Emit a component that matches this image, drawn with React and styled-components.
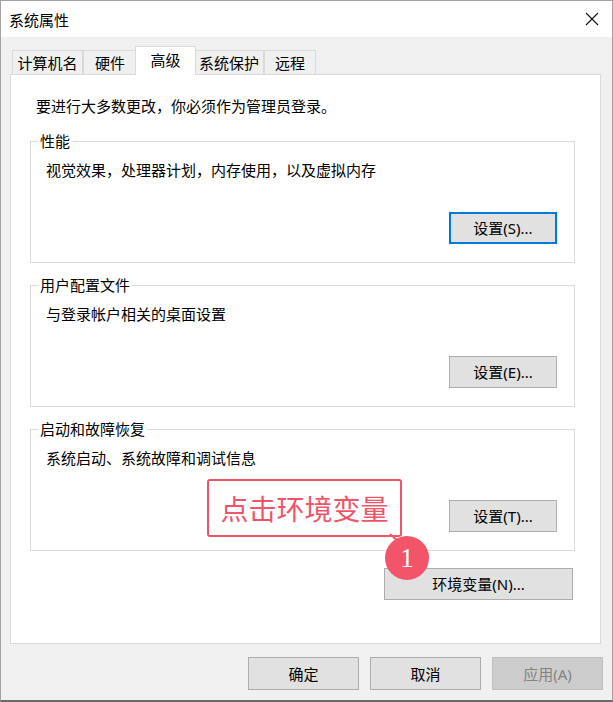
import React from "react";
import styled, { createGlobalStyle } from "styled-components";

const GlobalStyle = createGlobalStyle`
  html, body {
    margin: 0;
    padding: 0;
    background: #ffffff;
  }
  body {
    font-family: "Noto Sans", "Noto Sans CJK SC", sans-serif;
    font-size: 15px;
    color: #000;
  }
`;

const Window = styled.div`
  box-sizing: border-box;
  width: 613px;
  height: 702px;
  border: 1px solid #a3a3a3;
  border-bottom: 2px solid #6b6b6b;
  display: flex;
  flex-direction: column;
  background: #f0f0f0;
`;

const TitleBar = styled.div`
  height: 36px;
  background: #ffffff;
  display: flex;
  align-items: center;
  justify-content: space-between;
  padding: 0 13px 0 8px;
  flex-shrink: 0;
`;

const Title = styled.span`
  font-family: "Noto Sans CJK SC", sans-serif;
  font-size: 15px;
  line-height: 20px;
  margin-top: 2px;
`;

const Body = styled.div`
  flex: 1;
  display: flex;
  flex-direction: column;
  padding: 10px 11px 0 9px;
`;

const TabRow = styled.div`
  display: flex;
  align-items: flex-end;
  height: 28px;
  margin: 0 0 -1px 2px;
`;

const Tab = styled.div`
  box-sizing: border-box;
  width: ${(p) => p.$w}px;
  height: ${(p) => (p.$active ? 29 : 25)}px;
  margin: ${(p) => (p.$active ? "0 -2px" : "0")};
  background: ${(p) => (p.$active ? "#ffffff" : "#f0f0f0")};
  border: 1px solid #d9d9d9;
  border-bottom: ${(p) => (p.$active ? "none" : "1px solid #d9d9d9")};
  position: relative;
  z-index: ${(p) => (p.$active ? 2 : 1)};
  display: flex;
  align-items: ${(p) => (p.$active ? "flex-start" : "center")};
  padding-top: ${(p) => (p.$active ? "3px" : "0")};
  justify-content: center;
  font-family: "Noto Sans CJK SC", sans-serif;
  font-size: 15px;
  line-height: 20px;
`;

const Panel = styled.div`
  box-sizing: border-box;
  height: 570px;
  background: #ffffff;
  border: 1px solid #d9d9d9;
  padding: 21px 25px 0 19px;
  display: flex;
  flex-direction: column;
  position: relative;
`;

const Intro = styled.div`
  margin-left: 6px;
  line-height: 20px;
  font-family: "Noto Sans CJK SC", sans-serif;
`;

const Group = styled.div`
  border: 1px solid #dcdcdc;
  margin-top: ${(p) => (p.$first ? 25 : 22)}px;
  padding: 0 17px 18px 15px;
  display: flex;
  flex-direction: column;
`;

const Legend = styled.div`
  align-self: flex-start;
  margin: -11px 0 0 -8px;
  padding: 0 2px;
  background: #ffffff;
  line-height: 20px;
  font-family: "Noto Sans CJK SC", sans-serif;
`;

const Desc = styled.div`
  margin-top: 9px;
  line-height: 20px;
  font-family: "Noto Sans CJK SC", sans-serif;
`;

const Button = styled.button`
  box-sizing: border-box;
  width: ${(p) => p.$w || 108}px;
  height: ${(p) => p.$h || 32}px;
  margin: 0;
  padding: 0;
  background: ${(p) => (p.$disabled ? "#cccccc" : "#e1e1e1")};
  border: ${(p) =>
    p.$focus
      ? "2px solid #0078d7"
      : p.$disabled
      ? "1px solid #bfbfbf"
      : "1px solid #adadad"};
  color: ${(p) => (p.$disabled ? "#838383" : "#000")};
  font-family: "Noto Sans", "Noto Sans CJK SC", sans-serif;
  font-size: 15px;
  line-height: 20px;
  cursor: default;
`;

const GroupButton = styled(Button)`
  align-self: flex-end;
  margin-top: 32px;
`;

const EnvRow = styled.div`
  display: flex;
  justify-content: flex-end;
  margin-top: 17px;
  padding-right: 2px;
`;

const Footer = styled.div`
  display: flex;
  justify-content: flex-end;
  gap: 11px;
  padding: 13px 8px 0 0;
  margin-right: -10px;
`;

const Callout = styled.div`
  position: absolute;
  left: 196px;
  top: 404px;
  box-sizing: border-box;
  width: 195px;
  height: 58px;
  border: 2px solid #f05469;
  border-radius: 3px;
  background: #ffffff;
  color: #f05469;
  font-family: "Noto Sans CJK SC", sans-serif;
  font-size: 28px;
  line-height: 54px;
  text-align: center;
  z-index: 3;
`;

const Badge = styled.div`
  position: absolute;
  left: 374px;
  top: 461px;
  width: 44px;
  height: 44px;
  border-radius: 50%;
  background: #f2556a;
  color: #ffffff;
  font-family: "Liberation Serif", serif;
  font-size: 27px;
  line-height: 44px;
  text-align: center;
  z-index: 4;
`;

const Connector = styled.svg`
  position: absolute;
  left: 376px;
  top: 458px;
  z-index: 4;
`;

const CloseIcon = () => (
  <svg width="14" height="14" viewBox="0 0 14 14">
    <path d="M1 1 L13 13 M13 1 L1 13" stroke="#111" strokeWidth="1.1" fill="none" />
  </svg>
);

const groups = [
  { title: "性能", desc: "视觉效果，处理器计划，内存使用，以及虚拟内存", btn: "设置(S)...", focus: true },
  { title: "用户配置文件", desc: "与登录帐户相关的桌面设置", btn: "设置(E)..." },
  { title: "启动和故障恢复", desc: "系统启动、系统故障和调试信息", btn: "设置(T)..." },
];

const tabs = [
  { label: "计算机名", w: 71 },
  { label: "硬件", w: 54 },
  { label: "高级", w: 61, active: true },
  { label: "系统保护", w: 70 },
  { label: "远程", w: 52 },
];

export default function App() {
  return (
    <>
      <GlobalStyle />
      <Window>
        <TitleBar>
          <Title>系统属性</Title>
          <CloseIcon />
        </TitleBar>
        <Body>
          <TabRow>
            {tabs.map((t) => (
              <Tab key={t.label} $w={t.w} $active={t.active}>
                {t.label}
              </Tab>
            ))}
          </TabRow>
          <Panel>
            <Intro>要进行大多数更改，你必须作为管理员登录。</Intro>
            {groups.map((g, i) => (
              <Group key={g.title} $first={i === 0}>
                <Legend>{g.title}</Legend>
                <Desc>{g.desc}</Desc>
                <GroupButton $focus={g.focus}>{g.btn}</GroupButton>
              </Group>
            ))}
            <EnvRow>
              <Button $w={189} $h={32}>环境变量(N)...</Button>
            </EnvRow>
            <Callout>点击环境变量</Callout>
            <Connector width="14" height="10" viewBox="0 0 14 10">
              <path d="M3 1 L11 8" stroke="#f05469" strokeWidth="2" fill="none" />
            </Connector>
            <Badge>1</Badge>
          </Panel>
          <Footer>
            <Button $w={111} $h={33}>确定</Button>
            <Button $w={111} $h={33}>取消</Button>
            <Button $w={111} $h={33} $disabled>应用(A)</Button>
          </Footer>
        </Body>
      </Window>
    </>
  );
}
